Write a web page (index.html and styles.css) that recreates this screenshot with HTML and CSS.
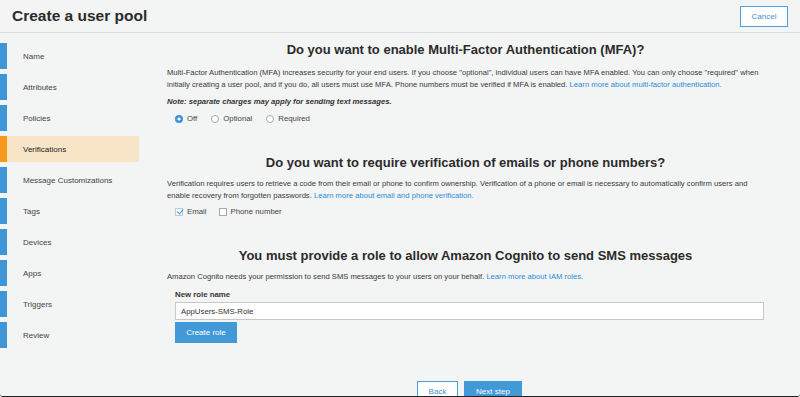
FILE: index.html
```html
<!DOCTYPE html>
<html lang="en">
<head>
    <meta charset="UTF-8">
    <meta name="viewport" content="width=device-width, initial-scale=1.0">
    <title>Create a user pool</title>
    <link rel="stylesheet" href="styles.css">
</head>
<body>
    <div class="app">
        <header class="topbar">
            <h1>Create a user pool</h1>
            <button class="btn-outline cancel">Cancel</button>
        </header>

        <div class="layout">
            <nav class="steps">
                <a class="step">Name</a>
                <a class="step">Attributes</a>
                <a class="step">Policies</a>
                <a class="step active">Verifications</a>
                <a class="step">Message Customizations</a>
                <a class="step">Tags</a>
                <a class="step">Devices</a>
                <a class="step">Apps</a>
                <a class="step">Triggers</a>
                <a class="step">Review</a>
            </nav>

            <main class="content">
                <section class="block mfa">
                    <h2>Do you want to enable Multi-Factor Authentication (MFA)?</h2>
                    <p class="desc">Multi-Factor Authentication (MFA) increases security for your end users. If you choose "optional", individual users can have MFA enabled. You can only choose "required" when initially creating a user pool, and if you do, all users must use MFA. Phone numbers must be verified if MFA is enabled. <a href="#">Learn more about multi-factor authentication.</a></p>
                    <p class="note">Note: separate charges may apply for sending text messages.</p>
                    <div class="choices">
                        <label><input type="radio" name="mfa" checked> Off</label>
                        <label><input type="radio" name="mfa"> Optional</label>
                        <label><input type="radio" name="mfa"> Required</label>
                    </div>
                </section>

                <section class="block verify">
                    <h2>Do you want to require verification of emails or phone numbers?</h2>
                    <p class="desc">Verification requires users to retrieve a code from their email or phone to confirm ownership. Verification of a phone or email is necessary to automatically confirm users and enable recovery from forgotten passwords. <a href="#">Learn more about email and phone verification.</a></p>
                    <div class="choices checks">
                        <label><input type="checkbox" checked> Email</label>
                        <label><input type="checkbox"> Phone number</label>
                    </div>
                </section>

                <section class="block sms">
                    <h2>You must provide a role to allow Amazon Cognito to send SMS messages</h2>
                    <p class="desc">Amazon Cognito needs your permission to send SMS messages to your users on your behalf. <a href="#">Learn more about IAM roles.</a></p>
                    <div class="field">
                        <label for="role">New role name</label>
                        <input type="text" id="role" value="AppUsers-SMS-Role">
                        <button class="btn-primary create">Create role</button>
                    </div>
                </section>

                <div class="footer">
                    <button class="btn-outline">Back</button>
                    <button class="btn-primary">Next step</button>
                </div>
            </main>
        </div>
    </div>
</body>
</html>
```

FILE: styles.css
```css
* {
    box-sizing: border-box;
}
body {
    margin: 0;
    font-family: "Liberation Sans", Arial, sans-serif;
    color: #333;
    background: #f3f4f4;
}
.app {
    height: 397px;
    overflow: hidden;
    border-bottom: 1px solid #222;
    border-radius: 0 0 3px 3px;
}
.topbar {
    height: 33px;
    border-bottom: 1px solid #dcdddd;
    display: flex;
    align-items: center;
    justify-content: space-between;
    padding: 0 12px;
}
.topbar h1 {
    margin: 0;
    font-size: 15.5px;
    font-weight: bold;
    color: #2b2b2b;
}
button {
    font-family: inherit;
    cursor: pointer;
}
.btn-outline {
    background: #fff;
    border: 1px solid #4a9fe0;
    color: #3f8fd0;
    font-size: 8px;
    padding: 0;
}
.btn-primary {
    background: #4299d8;
    border: none;
    color: #fff;
    font-size: 8px;
    padding: 0;
}
.cancel {
    width: 48px;
    height: 21px;
    margin-top: 1px;
    border-width: 1.5px;
}
.layout {
    display: flex;
}
.steps {
    width: 139px;
    padding-top: 10px;
    display: flex;
    flex-direction: column;
    gap: 5px;
}
.step {
    height: 26px;
    display: flex;
    align-items: center;
    font-size: 8px;
    color: #444;
    padding-left: 16px;
}
.step::before {
    content: "";
    width: 7px;
    height: 26px;
    background: #3f96d6;
    margin-left: -16px;
    margin-right: 16px;
}
.step.active {
    background: #f8e5c8;
    color: #222;
}
.step.active::before {
    background: #f7971c;
}
.content {
    flex: 1;
    margin-left: 28px;
    margin-right: 36px;
    padding-top: 8px;
}
.block h2 {
    margin: 0;
    font-size: 13px;
    line-height: 18px;
    text-align: center;
    color: #2b2b2b;
}
.block + .block {
    margin-top: 29px;
}
.desc {
    margin: 8px 0 0;
    font-size: 7.65px;
    line-height: 12px;
    color: #3a3a3a;
}
.desc a {
    color: #2d8dd3;
    text-decoration: none;
}
.verify .desc,
.sms .desc {
    margin-top: 6px;
}
.note {
    margin: 5px 0 0;
    font-size: 7.65px;
    line-height: 12px;
    font-weight: bold;
    font-style: italic;
}
.choices {
    margin: 5px 0 0 8px;
    display: flex;
    gap: 14px;
    font-size: 7.8px;
    line-height: 12px;
    color: #444;
}
.checks {
    margin-top: 4px;
    gap: 12px;
}
.choices label {
    display: flex;
    align-items: center;
    gap: 4px;
}
.choices input {
    appearance: none;
    margin: 0;
    width: 8px;
    height: 8px;
    border: 1px solid #aaa;
    background: #fff;
}
.choices input[type="radio"] {
    border-radius: 50%;
}
.choices input[type="radio"]:checked {
    border: none;
    background: radial-gradient(circle, #fff 0 1.3px, #3d92da 1.8px);
}
.choices input[type="checkbox"] {
    position: relative;
}
.choices input[type="checkbox"]:checked {
    border-color: #b7cde0;
}
.choices input[type="checkbox"]:checked::after {
    content: "";
    position: absolute;
    left: 2px;
    top: -1px;
    width: 3px;
    height: 5px;
    border: solid #3d8fd6;
    border-width: 0 1.5px 1.5px 0;
    transform: rotate(40deg);
}
.field {
    margin: 6px 0 0 8px;
    display: flex;
    flex-direction: column;
    align-items: flex-start;
}
.field label {
    font-size: 7.8px;
    line-height: 12px;
    font-weight: bold;
    color: #333;
}
.field input {
    margin-top: 1px;
    width: 100%;
    height: 18px;
    border: 1px solid #c8c8c8;
    background: #fff;
    font-family: inherit;
    font-size: 7.8px;
    color: #333;
    padding: 0 5px;
}
.create {
    margin-top: 2px;
    width: 62px;
    height: 21px;
}
.footer {
    margin-top: 38px;
    padding-left: 8px;
    display: flex;
    justify-content: center;
    gap: 6px;
}
.footer button {
    height: 21px;
}
.footer .btn-outline {
    width: 41px;
}
.footer .btn-primary {
    width: 58px;
}
```
